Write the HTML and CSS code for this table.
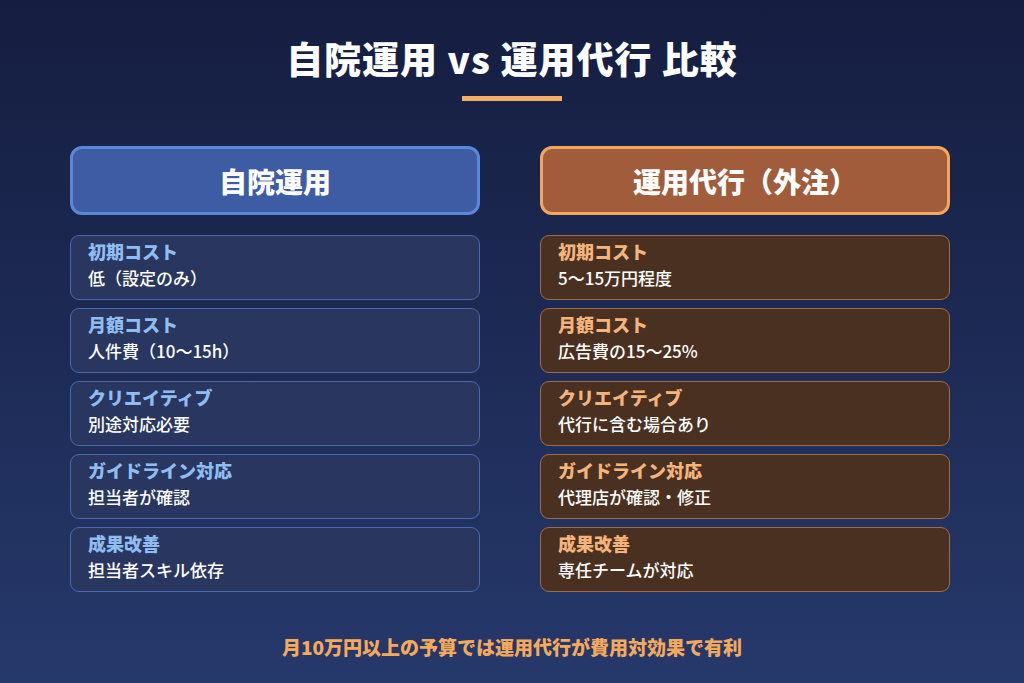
FILE: index.html
```html
<!DOCTYPE html>
<html lang="ja">
<head>
<meta charset="utf-8">
<title>自院運用 vs 運用代行 比較</title>
<link rel="stylesheet" href="styles.css">
</head>
<body>
<main class="page">
  <h1 class="title">自院運用 vs 運用代行 比較</h1>
  <div class="title-bar"></div>
  <section class="columns">
    <div class="column column-self">
      <div class="col-header">自院運用</div>
      <div class="rows">
        <div class="row"><div class="label">初期コスト</div><div class="value">低（設定のみ）</div></div>
        <div class="row"><div class="label">月額コスト</div><div class="value">人件費（10〜15h）</div></div>
        <div class="row"><div class="label">クリエイティブ</div><div class="value">別途対応必要</div></div>
        <div class="row"><div class="label">ガイドライン対応</div><div class="value">担当者が確認</div></div>
        <div class="row"><div class="label">成果改善</div><div class="value">担当者スキル依存</div></div>
      </div>
    </div>
    <div class="column column-agency">
      <div class="col-header">運用代行（外注）</div>
      <div class="rows">
        <div class="row"><div class="label">初期コスト</div><div class="value">5〜15万円程度</div></div>
        <div class="row"><div class="label">月額コスト</div><div class="value">広告費の15〜25%</div></div>
        <div class="row"><div class="label">クリエイティブ</div><div class="value">代行に含む場合あり</div></div>
        <div class="row"><div class="label">ガイドライン対応</div><div class="value">代理店が確認・修正</div></div>
        <div class="row"><div class="label">成果改善</div><div class="value">専任チームが対応</div></div>
      </div>
    </div>
  </section>
  <p class="footer">月10万円以上の予算では運用代行が費用対効果で有利</p>
</main>
</body>
</html>
```

FILE: styles.css
```css
* { box-sizing: border-box; }
html, body { margin: 0; padding: 0; }
body {
  width: 1024px;
  height: 683px;
  overflow: hidden;
  background: linear-gradient(180deg, #151e40 0%, #1d2a55 50%, #26396b 100%);
  font-family: "Noto Sans CJK JP", "Noto Sans", sans-serif;
  color: #ffffff;
}
.page {
  display: flex;
  flex-direction: column;
  align-items: center;
  padding-top: 36px;
}
.title {
  margin: 0;
  font-size: 37px;
  line-height: 44px;
  font-weight: 900;
  letter-spacing: 1px;
  color: #ffffff;
}
.title-bar {
  width: 100px;
  height: 5px;
  margin-top: 16px;
  background: #f5ae63;
}
.columns {
  display: grid;
  grid-template-columns: 410px 410px;
  column-gap: 60px;
  margin-top: 45px;
  margin-left: -4px;
}
.col-header {
  height: 69px;
  border-radius: 12px;
  border: 3px solid;
  display: flex;
  align-items: center;
  justify-content: center;
  font-size: 28px;
  font-weight: 900;
  color: #ffffff;
}
.column-self .col-header { background: #3d5ca4; border-color: #5b87d8; }
.column-agency .col-header { background: #a05c3b; border-color: #f2a65e; }
.rows {
  display: flex;
  flex-direction: column;
  gap: 8px;
  margin-top: 20px;
}
.row {
  height: 65px;
  border: 1px solid;
  border-radius: 9px;
  padding: 4px 17px 0;
}
.column-self .row { background: #293660; border-color: #4b67ad; }
.column-agency .row { background: #4a3020; border-color: #9e6c4a; }
.label {
  font-size: 18px;
  line-height: 22px;
  font-weight: 900;
}
.column-self .label { color: #8fbdf2; }
.column-agency .label { color: #f5b47c; }
.value {
  margin-top: 5px;
  font-size: 17px;
  line-height: 22px;
  font-weight: 500;
  color: #ffffff;
}
.footer {
  margin: 43px 0 0;
  font-size: 19px;
  line-height: 24px;
  font-weight: 900;
  color: #f5a95b;
}
```
